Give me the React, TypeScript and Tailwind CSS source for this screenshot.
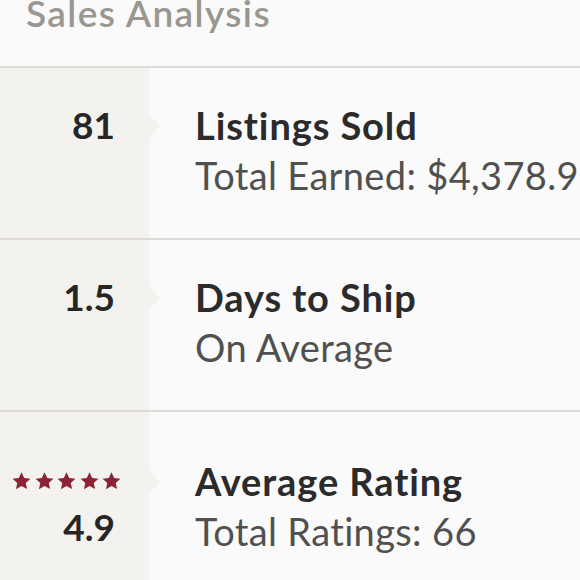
import React from "react";

function Star() {
  return (
    <svg width="19" height="18" viewBox="0 0 24 23" className="block">
      <path d="M12 0.3l3.4 7.3 8 .9-5.95 5.45 1.65 7.9L12 17.9l-7.1 4 1.65-7.9L.6 8.5l8-.9z" fill="#8b2236" />
    </svg>
  );
}

function Row({
  left,
  title,
  sub,
  notchTop,
  pt,
  h,
  border = true,
}: {
  left: React.ReactNode;
  title: string;
  sub: string;
  notchTop: string;
  pt: string;
  h: string;
  border?: boolean;
}) {
  return (
    <div className={`flex ${h} ${border ? "border-b-2 border-[#dedad7]" : ""}`}>
      <div className={`relative w-[149px] shrink-0 bg-[#f3f2ef] ${pt}`}>
        {left}
        <div
          className={`absolute left-[149px] ${notchTop} w-0 h-0 border-y-[12px] border-y-transparent border-l-[11px] border-l-[#f3f2ef]`}
        />
      </div>
      <div className={`flex-1 pl-[46px] ${pt} whitespace-nowrap overflow-hidden`}>
        <div className="text-[38px] leading-[48px] font-bold tracking-[0.9px] text-[#2b2b2b]">{title}</div>
        <div className="text-[38px] leading-[52px] tracking-[0.35px] text-[#505050]">{sub}</div>
      </div>
    </div>
  );
}

export default function App() {
  return (
    <div
      className="w-[580px] h-[580px] overflow-hidden bg-[#fafafa]"
      style={{ fontFamily: "Lato, 'Open Sans', sans-serif" }}
    >
      <div className="h-[68px] pl-[26px] border-b-2 border-[#dedad7] overflow-hidden">
        <div className="relative -top-[11px] text-[37px] leading-[48px] font-semibold tracking-[1.4px] text-[#9a9690]">
          Sales Analysis
        </div>
      </div>
      <Row
        h="h-[172px]"
        pt="pt-[33px]"
        notchTop="top-[46px]"
        left={<div className="text-right pr-[34px] text-[37px] leading-[48px] font-bold text-[#262626]">81</div>}
        title="Listings Sold"
        sub="Total Earned: $4,378.93"
      />
      <Row
        h="h-[172px]"
        pt="pt-[33px]"
        notchTop="top-[46px]"
        left={<div className="text-right pr-[34px] text-[37px] leading-[48px] font-bold text-[#262626]">1.5</div>}
        title="Days to Ship"
        sub="On Average"
      />
      <Row
        h="h-[200px]"
        border={false}
        pt="pt-[45px]"
        notchTop="top-[58px]"
        left={
          <div className="flex flex-col items-end">
            <div className="flex gap-[3.5px] pt-[15px] pr-[28px]">
              <Star />
              <Star />
              <Star />
              <Star />
              <Star />
            </div>
            <div className="mt-[13px] pr-[34px] text-[37px] leading-[48px] font-bold text-[#262626]">4.9</div>
          </div>
        }
        title="Average Rating"
        sub="Total Ratings: 66"
      />
    </div>
  );
}
